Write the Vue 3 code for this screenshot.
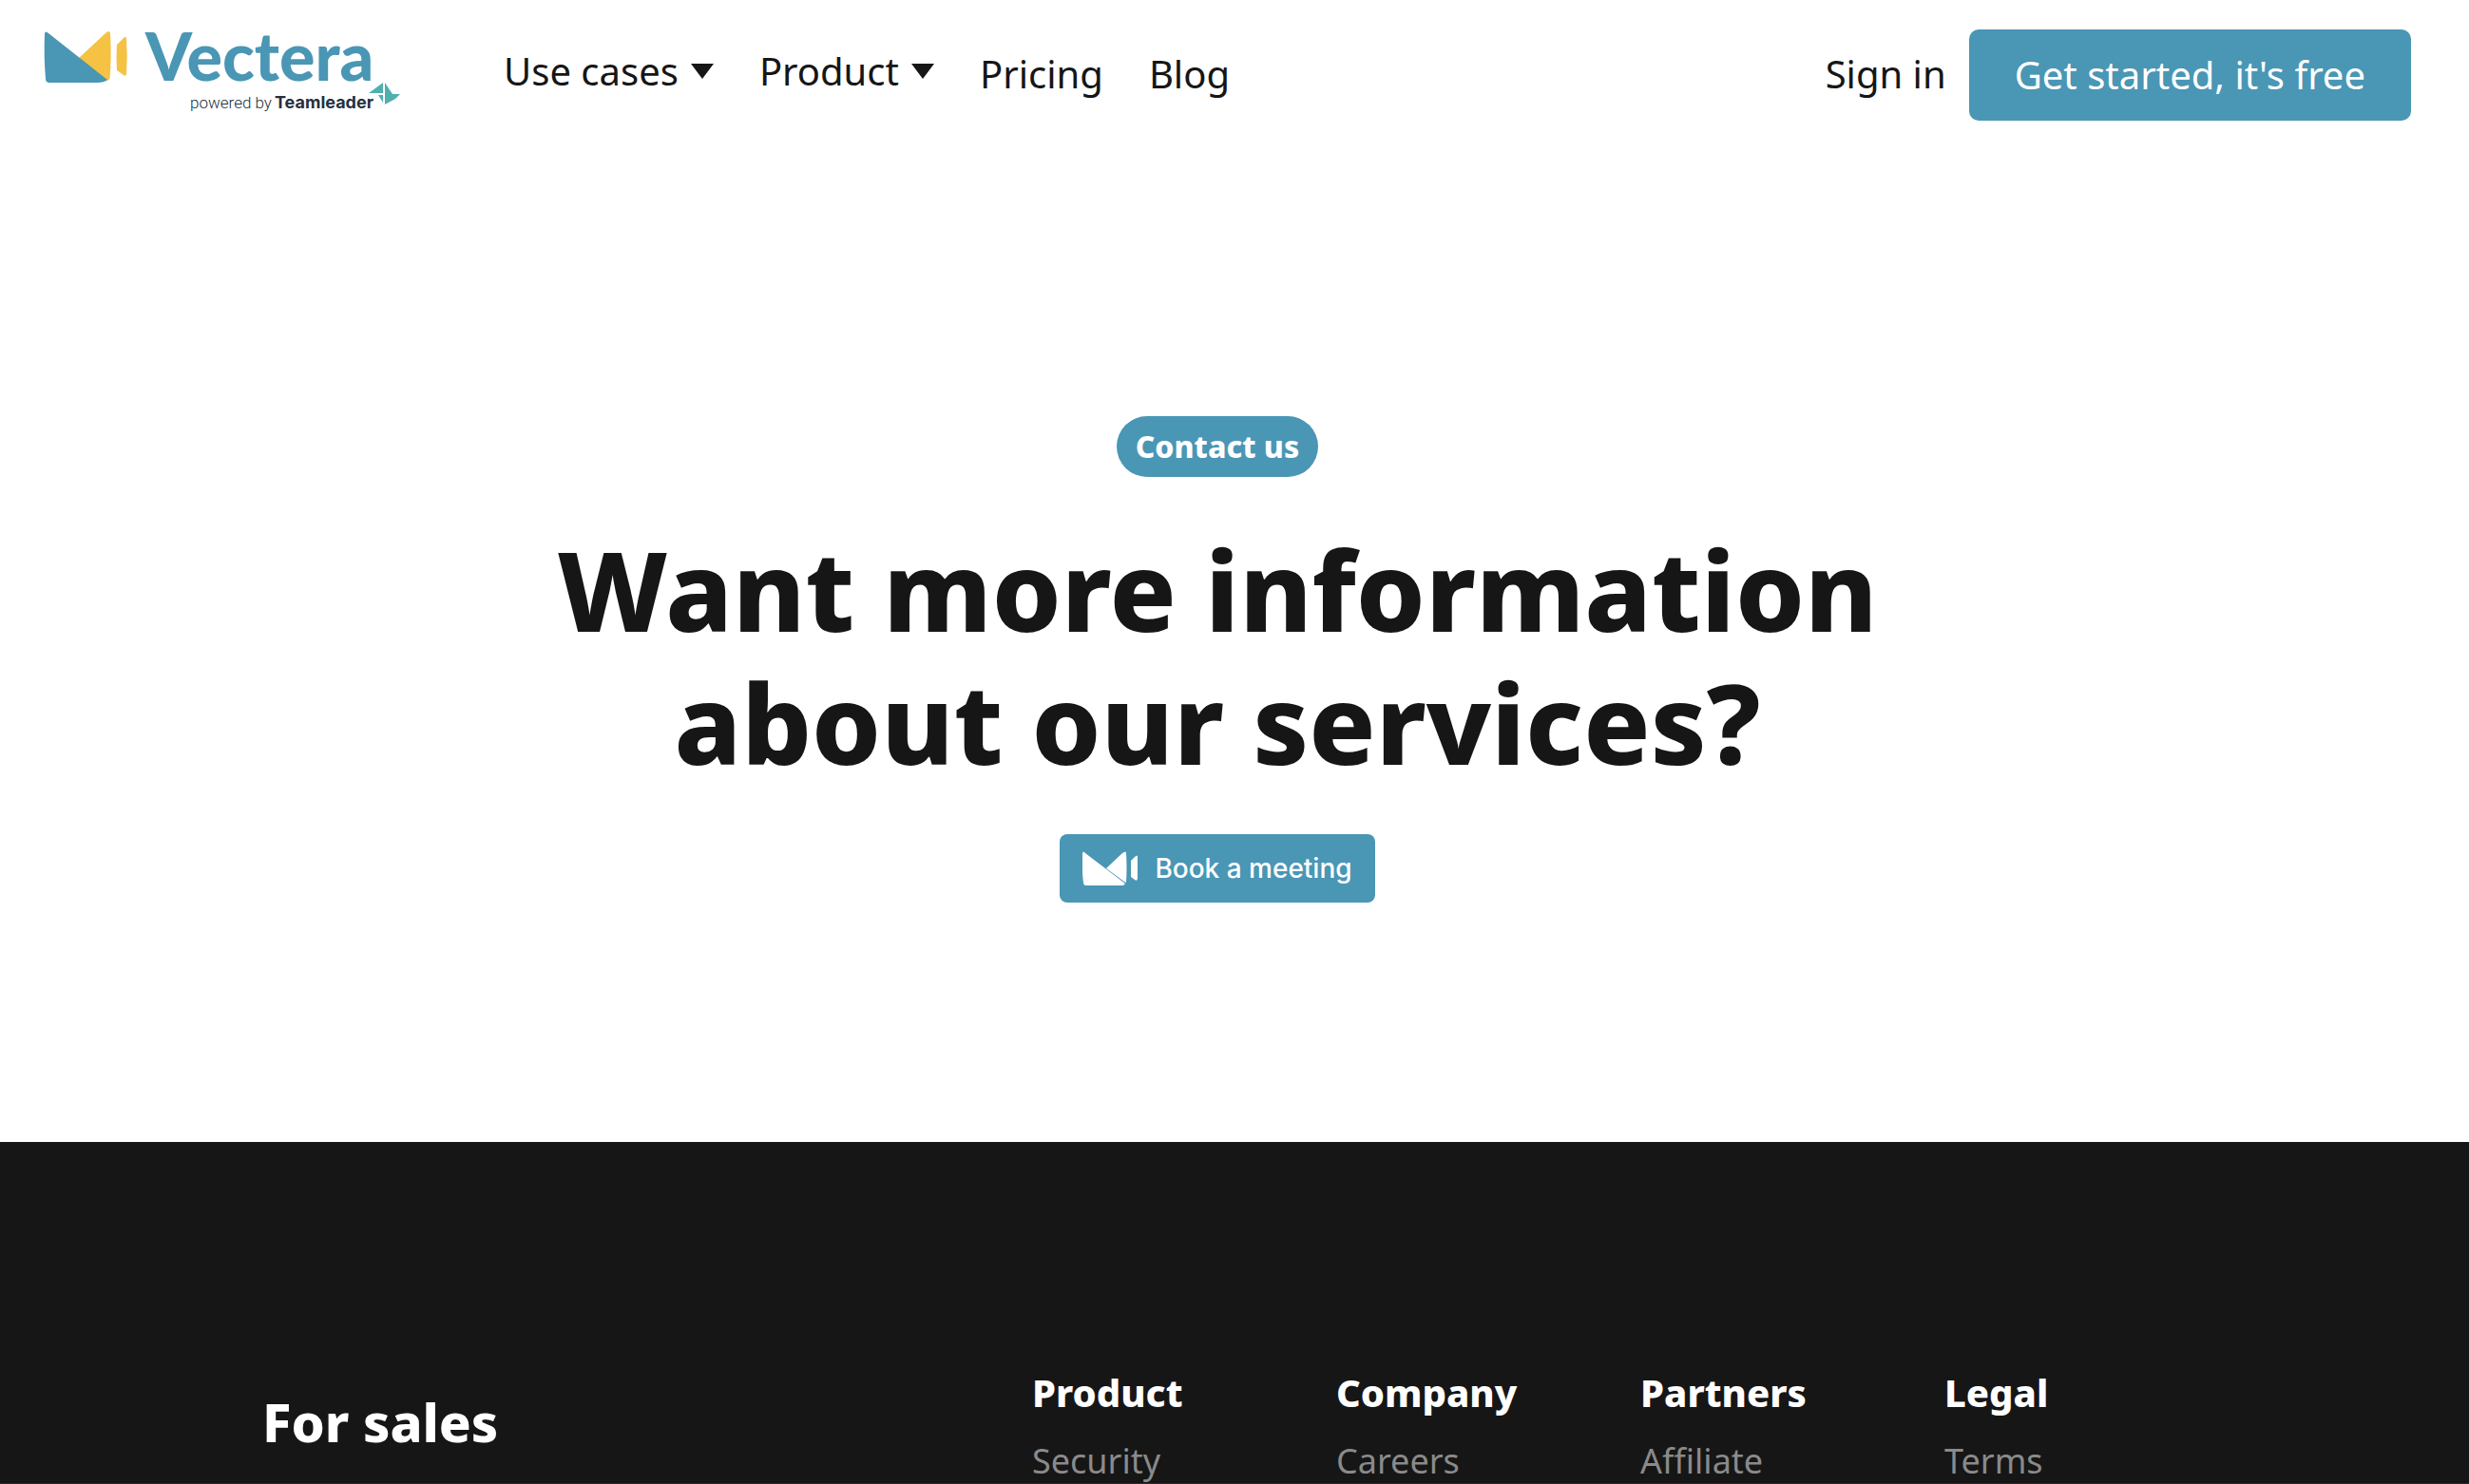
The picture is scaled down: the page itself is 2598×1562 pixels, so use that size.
<script setup>
const menus = ['Use cases', 'Product']
const links = ['Pricing', 'Blog']
const columns = [
  { title: 'Product', item: 'Security' },
  { title: 'Company', item: 'Careers' },
  { title: 'Partners', item: 'Affiliate' },
  { title: 'Legal', item: 'Terms' },
]
</script>

<template>
  <div class="page">
    <header class="header">
      <a class="logo" href="#" aria-label="Vectera, powered by Teamleader">
        <svg width="376" height="88" viewBox="0 0 376 88">
          <path fill="#f5c244" d="M36 31 65 4Q69 0 70 4 71.500 29 69.500 52L67 54Z" />
          <path fill="#4a96b5" d="M1 4Q2 1 5 4L67 53Q64 56 56 56H6Q2 56 2 52Q0 29 1 4Z" />
          <path fill="#f5c244" d="M77 16 84 9Q87 6 87 10 88.500 28 87 46 87 50 84 48L77 43Q76 29 77 16Z" />
          <text class="logo-name" x="107" y="54">Vectera</text>
          <text class="logo-by" x="154" y="83">powered by</text>
          <text class="logo-team" x="243" y="83">Teamleader</text>
          <path fill="#4fb0ae" d="M357 56V67H342ZM359 56 367 68H375L370 73 359 79ZM357 69V77L352 69Z" />
        </svg>
      </a>
      <nav class="nav">
        <button v-for="menu in menus" :key="menu" class="menu" type="button">
          {{ menu }}
          <svg width="24" height="16" viewBox="0 0 24 16"><path fill="#161616" d="M0 0H24L12 16Z" /></svg>
        </button>
        <a v-for="link in links" :key="link" href="#">{{ link }}</a>
      </nav>
      <a class="signin" href="#">Sign in</a>
      <button class="start" type="button">Get started, it's free</button>
    </header>

    <main class="hero">
      <span class="pill">Contact us</span>
      <h1>Want more information<br />about our services?</h1>
      <button class="book" type="button">
        <svg width="60" height="36" viewBox="0 0 60 36">
          <path fill="#fff" d="M0 2Q1-1 3 2L45 34 43 36H4Q1 36 1 33Q-1 17 0 2Z" />
          <path fill="#fff" d="M25 18 42 2Q46-1 46 2 47 18 46 33L44 32Z" />
          <path fill="#fff" d="M51 10 55 6Q58 3 58 6V28Q58 32 55 30L51 27Z" />
        </svg>
        Book a meeting
      </button>
    </main>

    <footer class="footer">
      <h2>For sales</h2>
      <section v-for="col in columns" :key="col.title">
        <h3>{{ col.title }}</h3>
        <a href="#">{{ col.item }}</a>
      </section>
    </footer>
  </div>
</template>

<style>
body {
  margin: 0;
  overflow: hidden;
}
</style>

<style scoped>
.page {
  display: flex;
  flex-direction: column;
  box-sizing: border-box;
  height: 100vh;
  overflow: hidden;
  border-bottom: 1px solid #30282b;
  background: #fff;
  color: #161616;
  font-family: "Noto Sans", sans-serif;
}
button {
  border: 0;
  padding: 0;
  background: none;
  color: inherit;
  font: inherit;
  cursor: pointer;
}
a {
  color: inherit;
  text-decoration: none;
}
.header {
  display: flex;
  align-items: center;
  flex: none;
  padding: 31px 61px 0 46px;
  font-size: 40px;
  line-height: 56px;
}
.logo {
  display: flex;
  align-self: flex-start;
}
.logo svg {
  overflow: visible;
}
.logo-name {
  fill: #4a96b5;
  font: 900 70px Lato, sans-serif;
}
.logo-by {
  fill: #25303d;
  font: 300 17px Roboto, sans-serif;
}
.logo-team {
  fill: #25303d;
  font: 700 18px Inter, sans-serif;
}
.nav {
  display: flex;
  align-items: center;
  gap: 48px;
  flex: 1;
  margin-left: 108px;
  padding-bottom: 2px;
}
.menu {
  display: flex;
  align-items: center;
  gap: 13px;
  padding-bottom: 6px;
}
.signin {
  margin-right: 24px;
  padding-bottom: 2px;
}
.start {
  padding: 20px 48px;
  border-radius: 10px;
  background: #4a96b5;
  color: #fff;
}
.hero {
  display: flex;
  flex-direction: column;
  align-items: center;
  flex: none;
  padding: 311px 36px 252px 0;
}
.pill {
  padding: 12px 20px;
  border-radius: 32px;
  background: #4a96b5;
  color: #fff;
  font-weight: 800;
  font-size: 32px;
  line-height: 40px;
}
h1 {
  margin: 48px 0;
  font-weight: 800;
  font-size: 116px;
  line-height: 140px;
  text-align: center;
}
.book {
  display: flex;
  align-items: center;
  gap: 16px;
  padding: 18px 24px;
  border-radius: 8px;
  background: #4a96b5;
  color: #fff;
  font: 500 28px/36px Inter, sans-serif;
}
.footer {
  display: grid;
  grid-template-columns: 810px repeat(4, 320px);
  flex: 1 0 auto;
  padding: 236px 0 0 276px;
  background: #161616;
  color: #fff;
}
h2 {
  margin: 22px 0 0;
  font-weight: 800;
  font-size: 56px;
  line-height: 72px;
}
h3 {
  margin: 0 0 16px;
  font-weight: 800;
  font-size: 40px;
  line-height: 56px;
}
.footer a {
  display: block;
  color: #8a8a8a;
  font-size: 36px;
  line-height: 56px;
}
</style>
